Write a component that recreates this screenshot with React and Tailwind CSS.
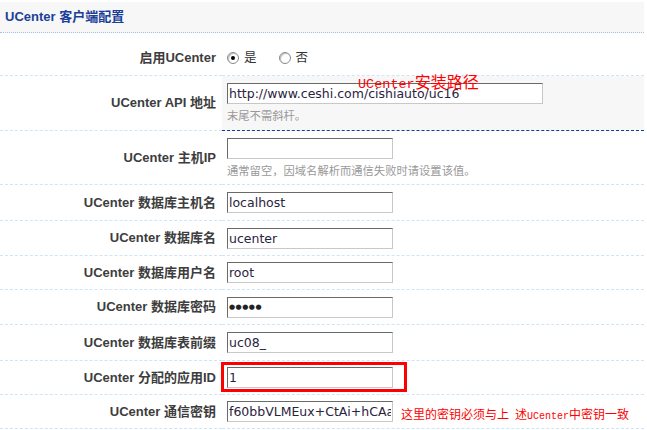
import React from "react";

const F = { fontFamily: '"Liberation Sans", "Noto Sans CJK SC", sans-serif' };

function Input({ value, w = "w-[166px]", extra = "text-[12.5px]" }) {
  return (
    <input
      readOnly
      type="text"
      value={value}
      className={`${w} h-[21px] shrink-0 border border-t-[#6a6a6a] border-l-[#6a6a6a] border-r-[#c8c8c8] border-b-[#c8c8c8] bg-white px-[1px] text-[#2a2340] outline-none ${extra}`}
      style={{ fontFamily: '"DejaVu Sans", "Noto Sans CJK SC", sans-serif' }}
    />
  );
}

function Row({ label, h, children, rightClass = "", rightBorder = "border-[#cfe5f7]", leftClass = "items-center" }) {
  return (
    <div className={`flex ${h}`}>
      <div
        className={`w-[222px] shrink-0 flex justify-end pr-[6px] border-b border-dashed border-[#cfe5f7] text-[13px] font-bold text-[#3d3d3d] ${leftClass}`}
      >
        {label}
      </div>
      <div className={`relative flex-1 border-b border-dashed ${rightBorder} pl-[5px] ${rightClass}`}>
        {children}
      </div>
    </div>
  );
}

function Radio({ checked }) {
  return (
    <span className="w-[12px] h-[12px] rounded-full border border-[#8a8a8a] bg-white flex items-center justify-center shrink-0 shadow-[inset_1px_1px_1px_#bbb]">
      {checked && <span className="w-[4px] h-[4px] rounded-full bg-black" />}
    </span>
  );
}

export default function App() {
  return (
    <div className="w-[647px] h-[430px] bg-white overflow-hidden pt-[2px]" style={F}>
      <div className="w-[644px]">
        <div className="h-[31px] bg-[#f7f7f7] border-b border-dotted border-[#9fc3ea] flex items-center pl-[5px] text-[13px] font-bold text-[#1b3f99]">
          UCenter 客户端配置
        </div>

        <Row label="启用UCenter" h="h-[43px]" leftClass="items-center pt-[8px]" rightClass="flex items-center pt-[8px]">
          <Radio checked />
          <span className="ml-[5px] text-[12.5px] text-[#333]">是</span>
          <span className="ml-[22px]" />
          <Radio />
          <span className="ml-[5px] text-[12.5px] text-[#333]">否</span>
        </Row>

        <Row
          label="UCenter API 地址"
          h="h-[55px]"
          rightBorder="border-[#0b3ea8]"
          rightClass="bg-[#f7f7f7] pt-[5px]"
        >
          <Input w="w-[316px]" value="http://www.ceshi.com/cishiauto/uc16" />
          <div className="mt-[3px] leading-[16px] text-[11.3px] text-[#999]">末尾不需斜杆。</div>
          <div className="absolute left-[136px] top-[-3px] leading-none text-[#ff0000] whitespace-nowrap">
            <span className="text-[13.5px]" style={{ fontFamily: '"Liberation Mono", monospace' }}>UCenter</span>
            <span className="text-[16px]" style={{ fontFamily: '"Noto Sans CJK SC", sans-serif' }}>安装路径</span>
          </div>
        </Row>

        <Row label="UCenter 主机IP" h="h-[54px]" rightClass="pt-[5px]">
          <Input value="" />
          <div className="mt-[3px] leading-[16px] text-[11.3px] text-[#999]">通常留空，因域名解析而通信失败时请设置该值。</div>
        </Row>

        <Row label="UCenter 数据库主机名" h="h-[36px]" rightClass="flex items-center">
          <Input value="localhost" />
        </Row>
        <Row label="UCenter 数据库名" h="h-[35px]" rightClass="flex items-center">
          <Input value="ucenter" />
        </Row>
        <Row label="UCenter 数据库用户名" h="h-[34px]" rightClass="flex items-center">
          <Input value="root" />
        </Row>
        <Row label="UCenter 数据库密码" h="h-[35px]" rightClass="flex items-center">
          <Input value="●●●●●" extra="text-[7px] tracking-[0.5px] text-[#222]" />
        </Row>
        <Row label="UCenter 数据库表前缀" h="h-[36px]" rightClass="flex items-center">
          <Input value="uc08_" />
        </Row>
        <Row label="UCenter 分配的应用ID" h="h-[34px]" rightClass="flex items-center">
          <Input value="1" />
          <div className="absolute left-[-1px] top-[1px] w-[186px] h-[30px] border-[3px] border-[#ff0000]" />
        </Row>
        <Row label="UCenter 通信密钥" h="h-[34px]" rightClass="flex items-center">
          <Input value="f60bbVLMEux+CtAi+hCAalTe9b2bKdW7" />
          <span className="ml-[8px] mt-[6px] leading-none text-[12px] text-[#ff0000] whitespace-nowrap" style={{ fontFamily: '"Noto Sans CJK SC", sans-serif' }}>
            这里的密钥必须与上
            <span className="text-[10px]" style={{ fontFamily: '"Liberation Mono", monospace' }}> </span>
            述
            <span className="text-[10px]" style={{ fontFamily: '"Liberation Mono", monospace' }}>UCenter</span>
            中密钥一致
          </span>
        </Row>
      </div>
    </div>
  );
}
